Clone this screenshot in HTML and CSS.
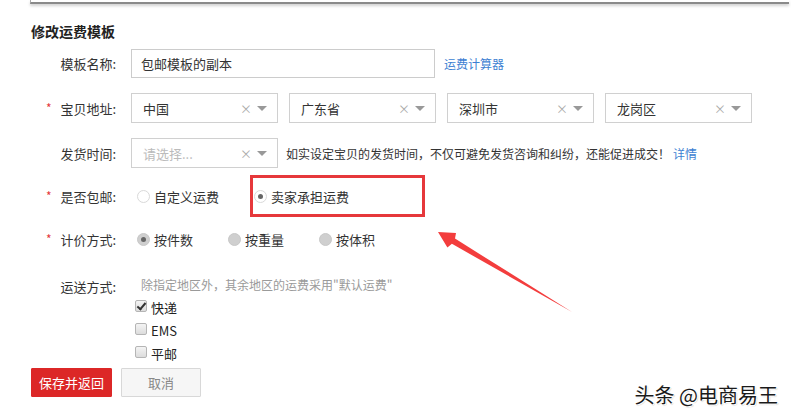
FILE: index.html
```html
<!DOCTYPE html>
<html lang="zh-CN">
<head>
<meta charset="utf-8">
<title>修改运费模板</title>
<link rel="stylesheet" href="styles.css">
</head>
<body>
<div class="page">
  <div class="topbar"></div>
  <div class="content">
    <h2 class="title">修改运费模板</h2>

    <div class="row">
      <div class="label">模板名称:</div>
      <div class="input">包邮模板的副本</div>
      <a class="link calc">运费计算器</a>
    </div>

    <div class="row">
      <div class="label"><span class="star">*</span>宝贝地址:</div>
      <div class="select"><span class="val">中国</span><span class="clear">×</span><span class="caret"></span></div>
      <div class="select"><span class="val">广东省</span><span class="clear">×</span><span class="caret"></span></div>
      <div class="select"><span class="val">深圳市</span><span class="clear">×</span><span class="caret"></span></div>
      <div class="select"><span class="val">龙岗区</span><span class="clear">×</span><span class="caret"></span></div>
    </div>

    <div class="row">
      <div class="label">发货时间:</div>
      <div class="select"><span class="val placeholder">请选择...</span><span class="clear">×</span><span class="caret"></span></div>
      <span class="tip">如实设定宝贝的发货时间，不仅可避免发货咨询和纠纷，还能促进成交！<a class="link">详情</a></span>
    </div>

    <div class="row radio-row">
      <div class="label"><span class="star">*</span>是否包邮:</div>
      <label class="radio"><span class="circle"></span>自定义运费</label>
      <label class="radio"><span class="circle on"></span>卖家承担运费</label>
    </div>

    <div class="row radio-row">
      <div class="label"><span class="star">*</span>计价方式:</div>
      <label class="radio"><span class="circle dis on"></span>按件数</label>
      <label class="radio"><span class="circle dis"></span>按重量</label>
      <label class="radio"><span class="circle dis"></span>按体积</label>
    </div>

    <div class="row ship-row">
      <div class="label">运送方式:</div>
      <span class="hint">除指定地区外，其余地区的运费采用"默认运费"</span>
    </div>
    <div class="checks">
      <label class="check"><span class="box checked"></span>快递</label>
      <label class="check"><span class="box"></span>EMS</label>
      <label class="check"><span class="box"></span>平邮</label>
    </div>

    <div class="actions">
      <button class="btn primary">保存并返回</button>
      <button class="btn">取消</button>
    </div>
  </div>

  <div class="highlight"></div>
  <svg class="arrow" width="791" height="419" viewBox="0 0 791 419">
    <polygon points="438,232 456,233 455,238.6 572,312 451.9,243.8 447.4,247.4" fill="#f33d3d"/>
  </svg>
  <div class="watermark">头条 @电商易王</div>
</div>
</body>
</html>
```

FILE: styles.css
```css
html, body {
  margin: 0;
  padding: 0;
  background: #fff;
}
body {
  font-family: "Noto Sans CJK SC", "Liberation Sans", sans-serif;
  font-size: 12px;
  color: #333;
}
.page {
  position: relative;
  width: 791px;
  height: 419px;
  overflow: hidden;
}
.topbar {
  margin-left: 30px;
  margin-right: 2px;
  height: 2px;
  border-left: 1px solid #aaa;
  border-bottom: 2px solid #8a8a8a;
  box-shadow: 0 2px 3px rgba(0,0,0,0.18);
}
.content {
  padding-left: 31px;
}
.title {
  margin: 17px 0 7px;
  font-size: 14px;
  line-height: 20px;
  font-weight: bold;
  color: #222;
}
.row {
  display: flex;
  align-items: center;
  height: 30px;
  margin-bottom: 15px;
}
.label {
  width: 85px;
  flex: none;
  display: flex;
  justify-content: flex-end;
  padding-left: 15px;
  box-sizing: border-box;
  margin-right: 15px;
  font-size: 13px;
  color: #333;
}
.label .star {
  color: #e4393c;
  margin-right: auto;
  font-size: 12px;
}
.input {
  width: 304px;
  height: 29px;
  box-sizing: border-box;
  border: 1px solid #ccc;
  padding-left: 9px;
  line-height: 27px;
  font-size: 13px;
  color: #333;
}
.link {
  color: #3d7fd2;
  text-decoration: none;
  font-size: 12px;
}
.calc {
  margin-left: 9px;
}
.select {
  width: 147px;
  height: 30px;
  box-sizing: border-box;
  border: 1px solid #d0d0d0;
  margin-right: 11px;
  display: flex;
  align-items: center;
  padding-left: 11px;
  font-size: 13px;
  flex: none;
}
.select .val {
  flex: 1;
}
.select .placeholder {
  color: #bbb;
}
.select .clear {
  color: #aaa;
  font-size: 12px;
  width: 10px;
  margin-right: 7px;
}
.select .caret {
  width: 0;
  height: 0;
  border-left: 5px solid transparent;
  border-right: 5px solid transparent;
  border-top: 5px solid #999;
  margin-right: 10px;
}
.tip {
  margin-left: -3px;
  color: #333;
}
.tip .link {
  margin-left: 3px;
}
.radio-row {
  height: 26px;
  margin-top: 15px;
  margin-bottom: 17px;
}
.radio-row .label {
  margin-right: 21px;
}
.radio {
  display: flex;
  align-items: center;
  font-size: 13px;
  margin-right: 35px;
  color: #333;
}
.circle {
  width: 13px;
  height: 13px;
  box-sizing: border-box;
  border-radius: 50%;
  border: 1px solid #d9d9d9;
  background: #fff;
  margin-right: 4px;
  display: flex;
  align-items: center;
  justify-content: center;
}
.circle.on::after {
  content: "";
  width: 5px;
  height: 5px;
  border-radius: 50%;
  background: #666;
}
.circle.dis {
  background: #cfcfcf;
  border-color: #c8c8c8;
}
.ship-row {
  height: 20px;
  margin-top: 24px;
  margin-bottom: 0;
}
.ship-row .label {
  margin-right: 25px;
}
.hint {
  color: #9a9a9a;
  font-size: 12px;
  margin-top: -4px;
}
.checks {
  display: flex;
  flex-direction: column;
  padding-left: 104px;
}
.check {
  display: flex;
  align-items: center;
  height: 23px;
  font-size: 13px;
  color: #222;
}
.box {
  width: 12px;
  height: 12px;
  box-sizing: border-box;
  border: 1px solid #b5b5b5;
  border-radius: 2px;
  background: linear-gradient(#f4f4f4, #dcdcdc);
  margin-right: 4px;
  position: relative;
  top: -2px;
}
.box.checked::after {
  content: "";
  position: absolute;
  left: 3px;
  top: 0px;
  width: 3px;
  height: 7px;
  border-right: 2px solid #333;
  border-bottom: 2px solid #333;
  transform: rotate(40deg);
}
.actions {
  display: flex;
  gap: 9px;
  margin-top: 3px;
}
.btn {
  height: 29px;
  box-sizing: border-box;
  font-family: "Noto Sans CJK SC", sans-serif;
  font-size: 13px;
  border: 1px solid #d8d8d8;
  background: #f6f6f6;
  color: #888;
  width: 80px;
  padding: 0;
  border-radius: 1px;
}
.btn.primary {
  width: 81px;
  background: #dc2727;
  border-color: #dc2727;
  color: #fff;
}
.highlight {
  position: absolute;
  left: 250px;
  top: 175px;
  width: 175px;
  height: 42px;
  box-sizing: border-box;
  border: 3px solid #e6383b;
}
.arrow {
  position: absolute;
  left: 0;
  top: 0;
  pointer-events: none;
}
.watermark {
  position: absolute;
  right: 13px;
  top: 382px;
  font-size: 20px;
  line-height: 26px;
  color: #1a1a1a;
  text-shadow: 1px 1px 0 #fff, -1px -1px 0 #fff, 1px -1px 0 #fff, -1px 1px 0 #fff, 1px 1px 1px #999;
}
```
